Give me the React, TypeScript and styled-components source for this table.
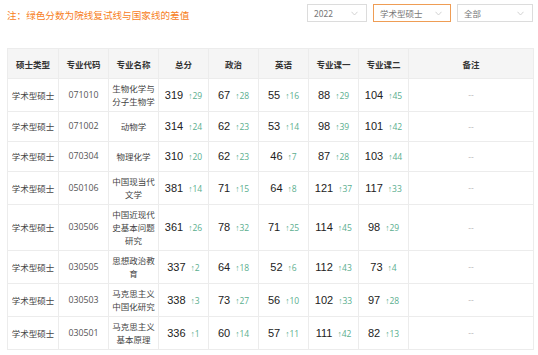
import React from "react";
import styled, { createGlobalStyle } from "styled-components";

const Global = createGlobalStyle`
  html, body { margin: 0; padding: 0; background: #fff; }
  body { font-family: "Noto Sans CJK SC", "Liberation Sans", sans-serif; font-size: 9px; }
`;

const Page = styled.div`
  width: 538px;
  height: 355px;
  padding: 0 5px 0 7px;
  box-sizing: border-box;
  overflow: hidden;
`;

const TopBar = styled.div`
  display: flex;
  align-items: center;
  height: 28px;
`;

const Note = styled.div`
  flex: 1;
  font-size: 9.6px;
  color: #f7801c;
  line-height: 14px;
  margin-top: 1px;
`;

const Selects = styled.div`
  display: flex;
  gap: 6px;
  align-items: center;
  margin-top: -2px;
`;

const SelectBox = styled.div<{ $w: number; $active?: boolean }>`
  width: ${(p) => p.$w}px;
  height: 18px;
  box-sizing: border-box;
  border: 1px solid ${(p) => (p.$active ? "#ef9d55" : "#dcdcdc")};
  display: flex;
  align-items: center;
  justify-content: space-between;
  padding: 0 8px 0 6px;
  font-size: 8.5px;
  color: #777;
  background: #fff;
  white-space: nowrap;
`;

const Chevron = () => (
  <svg width="7" height="5" viewBox="0 0 7 5">
    <path d="M0.5 0.8 L3.5 4 L6.5 0.8" fill="none" stroke="#c8c8c8" strokeWidth="0.8" />
  </svg>
);

const TableWrap = styled.div`
  margin-top: 20px;
`;

const Table = styled.table`
  border-collapse: collapse;
  table-layout: fixed;
  width: 526px;
`;

const Th = styled.th`
  background: #f5f5f5;
  border: 1px solid #ececec;
  height: 29px;
  font-size: 8.5px;
  line-height: 12px;
  font-weight: bold;
  color: #333;
  padding: 0;
  text-align: center;
`;

const Td = styled.td`
  border: 1px solid #ececec;
  padding: 3px 1px;
  text-align: center;
  vertical-align: middle;
  font-size: 8.5px;
  color: #444;
  line-height: 13px;
  white-space: nowrap;
`;

const Code = styled(Td)`
  font-family: "Open Sans", "Liberation Sans", sans-serif;
  font-size: 8.8px;
  color: #555;
`;

const ScoreCell = styled.td`
  border: 1px solid #ececec;
  padding: 3px 1px;
  text-align: center;
  vertical-align: middle;
  font-family: "Liberation Sans", sans-serif;
  font-size: 11px;
  line-height: 23px;
  white-space: nowrap;
`;

const Num = styled.span`
  font-size: 11px;
  color: #222;
`;

const Diff = styled.span`
  font-size: 8.5px;
  color: #5aae8e;
  margin-left: 5px;
  font-family: "Open Sans", "Liberation Sans", sans-serif;
`;

const Remark = styled.td`
  border: 1px solid #ececec;
  text-align: center;
  font-size: 8px;
  line-height: 12px;
  color: #aaa;
`;

type Pair = [number, number];
type Row = {
  code: string;
  name: string[];
  total: Pair;
  pol: Pair;
  eng: Pair;
  s1: Pair;
  s2: Pair;
};

const rows: Row[] = [
  { code: "071010", name: ["生物化学与", "分子生物学"], total: [319, 29], pol: [67, 28], eng: [55, 16], s1: [88, 29], s2: [104, 45] },
  { code: "071002", name: ["动物学"], total: [314, 24], pol: [62, 23], eng: [53, 14], s1: [98, 39], s2: [101, 42] },
  { code: "070304", name: ["物理化学"], total: [310, 20], pol: [62, 23], eng: [46, 7], s1: [87, 28], s2: [103, 44] },
  { code: "050106", name: ["中国现当代", "文学"], total: [381, 14], pol: [71, 15], eng: [64, 8], s1: [121, 37], s2: [117, 33] },
  { code: "030506", name: ["中国近现代", "史基本问题", "研究"], total: [361, 26], pol: [78, 32], eng: [71, 25], s1: [114, 45], s2: [98, 29] },
  { code: "030505", name: ["思想政治教", "育"], total: [337, 2], pol: [64, 18], eng: [52, 6], s1: [112, 43], s2: [73, 4] },
  { code: "030503", name: ["马克思主义", "中国化研究"], total: [338, 3], pol: [73, 27], eng: [56, 10], s1: [102, 33], s2: [97, 28] },
  { code: "030501", name: ["马克思主义", "基本原理"], total: [336, 1], pol: [60, 14], eng: [57, 11], s1: [111, 42], s2: [82, 13] },
];

const Score = ({ v }: { v: Pair }) => (
  <ScoreCell>
    <Num>{v[0]}</Num>
    <Diff>↑{v[1]}</Diff>
  </ScoreCell>
);

const headers = ["硕士类型", "专业代码", "专业名称", "总分", "政治", "英语", "专业课一", "专业课二", "备注"];
const widths = [51, 50, 50, 50, 50, 50, 50, 50, 125];

export default function App() {
  return (
    <Page>
      <Global />
      <TopBar>
        <Note>注：绿色分数为院线复试线与国家线的差值</Note>
        <Selects>
          <SelectBox $w={60}>
            <span>2022</span>
            <Chevron />
          </SelectBox>
          <SelectBox $w={78} $active>
            <span>学术型硕士</span>
            <Chevron />
          </SelectBox>
          <SelectBox $w={76}>
            <span>全部</span>
            <Chevron />
          </SelectBox>
        </Selects>
      </TopBar>
      <TableWrap>
        <Table>
          <colgroup>
            {widths.map((w, i) => (
              <col key={i} style={{ width: w }} />
            ))}
          </colgroup>
          <thead>
            <tr>
              {headers.map((h) => (
                <Th key={h}>{h}</Th>
              ))}
            </tr>
          </thead>
          <tbody>
            {rows.map((r) => (
              <tr key={r.code}>
                <Td>学术型硕士</Td>
                <Code>{r.code}</Code>
                <Td>
                  {r.name.map((n, i) => (
                    <div key={i}>{n}</div>
                  ))}
                </Td>
                <Score v={r.total} />
                <Score v={r.pol} />
                <Score v={r.eng} />
                <Score v={r.s1} />
                <Score v={r.s2} />
                <Remark>--</Remark>
              </tr>
            ))}
          </tbody>
        </Table>
      </TableWrap>
    </Page>
  );
}
